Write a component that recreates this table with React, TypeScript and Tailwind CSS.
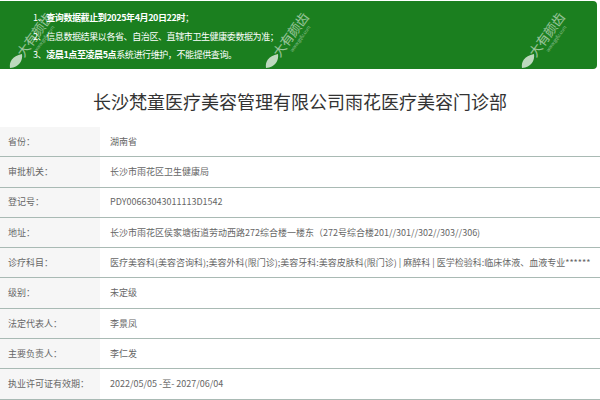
import React from "react";

const font = { fontFamily: '"Noto Sans CJK SC", "Noto Sans", sans-serif' };

function Watermark({ left }: { left: number }) {
  return (
    <>
      <svg className="absolute pointer-events-none" style={{ left, top: 52 }} width="16" height="16" viewBox="0 0 16 16">
        <path d="M2 15 C1 9 4 3 14 1 C15 8 11 14 2 15 Z" fill="#cfe3cf" opacity="0.9" />
      </svg>
      <div
        className="absolute pointer-events-none whitespace-nowrap leading-none origin-top-left -rotate-[54deg]"
        style={{ left: left + 6, top: 50 }}
      >
        <div className="text-[13px] text-white/55">大有颜齿</div>
        <div className="text-[5px] text-white/45 ml-[12px] mt-[1px]">www.gqfiz.com</div>
      </div>
    </>
  );
}

const rows: [string, string][] = [
  ["省份：", "湖南省"],
  ["审批机关：", "长沙市雨花区卫生健康局"],
  ["登记号：", "PDY00663043011113D1542"],
  ["地址：", "长沙市雨花区侯家塘街道劳动西路272综合楼一楼东（272号综合楼201//301//302//303//306)"],
  ["诊疗科目：", "医疗美容科(美容咨询科);美容外科(限门诊);美容牙科:美容皮肤科(限门诊) | 麻醉科 | 医学检验科:临床体液、血液专业******"],
  ["级别：", "未定级"],
  ["法定代表人：", "李景凤"],
  ["主要负责人：", "李仁发"],
  ["执业许可证有效期：", "2022/05/05 -至- 2027/06/04"],
];

export default function App() {
  return (
    <div className="w-[600px] h-[400px] overflow-hidden bg-white" style={font}>
      <div className="relative mt-[1px] mr-[3px] h-[68px] bg-[#1b7f1f] rounded-r-[4px] overflow-hidden pt-[8px] pl-[33px] text-white text-[9px] leading-[18.5px] tracking-[-0.4px]">
        <div>1、<span className="font-bold">查询数据截止到2025年4月20日22时</span>；</div>
        <div>2、信息数据结果以各省、自治区、直辖市卫生健康委数据为准；</div>
        <div>3、<span className="font-bold">凌晨1点至凌晨5点</span>系统进行维护，不能提供查询。</div>
        <Watermark left={8} />
        <Watermark left={264} />
        <Watermark left={520} />
      </div>
      <div className="h-[58px] flex items-center justify-center pt-[6px] text-[18px] text-[#333]">
        长沙梵童医疗美容管理有限公司雨花医疗美容门诊部
      </div>
      <div className="text-[9px] text-[#666]">
        {rows.map(([k, v]) => (
          <div key={k} className="flex h-[30.3px] border-b border-[#a9bab4]">
            <div className="w-[100px] shrink-0 bg-[#f6f6f6] pl-[8px] flex items-center">{k}</div>
            <div className="pl-[10px] flex items-center whitespace-nowrap">{v}</div>
          </div>
        ))}
      </div>
    </div>
  );
}
